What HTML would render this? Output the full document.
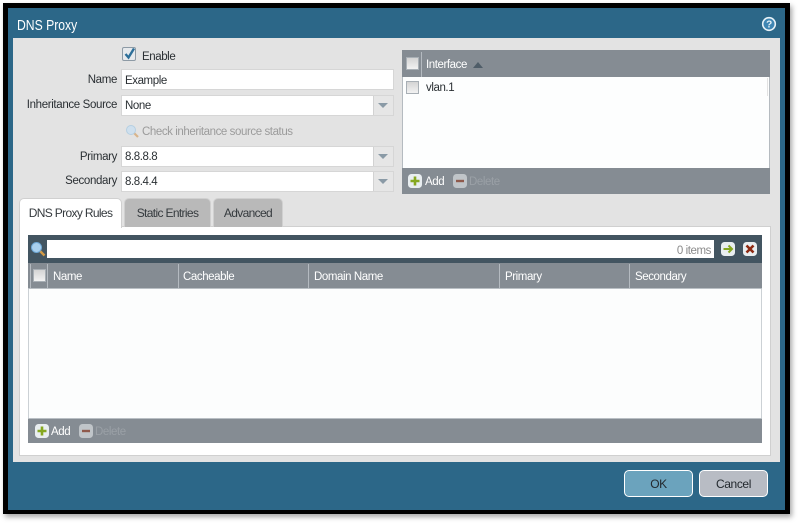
<!DOCTYPE html>
<html><head><meta charset="utf-8"><style>
html,body{margin:0;padding:0;width:800px;height:525px;overflow:hidden;background:#fff}
*{box-sizing:border-box}
body{font-family:"Liberation Sans",sans-serif;font-size:11.5px;letter-spacing:-.42px;color:#2a2f33;position:relative}
#w{position:absolute;left:0;top:0;width:800px;height:525px;filter:blur(.35px)}
.a{position:absolute;white-space:nowrap}
.lb{position:absolute;right:683px;text-align:right;white-space:nowrap;line-height:14px;letter-spacing:-.35px}
.inp{position:absolute;left:121px;width:273px;height:21px;background:#fff;border:1px solid #d6d6d6;line-height:21px;padding-left:3px}
.inp i{position:absolute;right:0;top:0;width:20px;height:19px;background:#e6e6e6;border-left:1px solid #d2d2d2}
.inp i:after{content:"";position:absolute;left:4px;top:7px;border:5px solid transparent;border-top:5px solid #8a9aa6;border-bottom:0}
.cb{position:absolute;width:13px;height:13px;background:linear-gradient(#d4d4d4,#f2f2f2);border:1px solid #a8afb5}
.tab{position:absolute;top:198px;height:29px;background:#b9b9b9;border:1px solid #d0d0d0;border-bottom:0;border-radius:5px 5px 0 0;text-align:center;line-height:28px;font-size:12px;letter-spacing:-.65px;color:#353a3e}
.h{position:absolute;background:#858c93;color:#fff}
.sep{position:absolute;width:1px;background:#b4bac0}
.btn{position:absolute;top:470px;height:27px;border:1.5px solid #fff;border-radius:5px;text-align:center;line-height:26px;font-size:12px;letter-spacing:-.4px;color:#23292e}
</style></head><body><div id="w">
<div class="a" style="left:3px;top:3px;width:787px;height:511px;background:#000;box-shadow:2px 3px 5px rgba(0,0,0,.35)"></div>
<div class="a" style="left:8px;top:8px;width:777px;height:502px;background:#2c6788"></div>
<div class="a" style="left:17px;top:17px;font-size:14.5px;letter-spacing:0;line-height:18px;color:#fff;transform:scaleX(.84);transform-origin:left">DNS Proxy</div>
<svg class="a" style="left:761px;top:16px" width="16" height="16" viewBox="0 0 16 16"><circle cx="8" cy="8" r="6.300" fill="#3f86b3" stroke="#e8f2f7" stroke-width="1.600"/><text x="8" y="11.500" font-size="10" font-weight="bold" text-anchor="middle" fill="#e8f2f7" font-family="Liberation Sans">?</text></svg>
<div class="a" style="left:13px;top:38px;width:767px;height:424px;background:#e3e3e3"></div>

<svg class="a" style="left:122px;top:47px" width="15" height="15" viewBox="0 0 15 15"><rect x=".5" y=".5" width="13" height="13" rx="1.500" fill="#e6e9ec" stroke="#8d9aa5"/><path d="M3.500 7l3 3.500L12 1.500" fill="none" stroke="#2d6f99" stroke-width="2.400"/></svg>
<div class="a" style="left:142px;top:50px;line-height:14px">Enable</div>
<div class="lb" style="top:73px">Name</div>
<div class="inp" style="top:69px;line-height:22px">Example</div>
<div class="lb" style="top:98px">Inheritance Source</div>
<div class="inp" style="top:95px">None<i></i></div>
<svg class="a" style="left:125px;top:124px" width="15" height="15" viewBox="0 0 15 15"><path d="M9 9l4 4" stroke="#d8b48a" stroke-width="2.200"/><circle cx="6" cy="6" r="4.500" fill="#cfe0ee" stroke="#b5cfe2"/></svg>
<div class="a" style="left:142px;top:125px;line-height:14px;color:#9b9b9b">Check inheritance source status</div>
<div class="lb" style="top:150px">Primary</div>
<div class="inp" style="top:146px">8.8.8.8<i></i></div>
<div class="lb" style="top:174px">Secondary</div>
<div class="inp" style="top:171px">8.8.4.4<i></i></div>

<div class="a" style="left:402px;top:50px;width:368px;height:144px;background:#fdfefe;border:1px solid #b5bbc0"></div>
<div class="h" style="left:402px;top:50px;width:368px;height:27px"></div>
<div class="sep" style="left:421px;top:52px;height:25px"></div>
<div class="cb" style="left:406px;top:57px"></div>
<div class="a" style="left:426px;top:58px;color:#fff;line-height:14px">Interface</div>
<div class="a" style="left:473px;top:62px;border:5px solid transparent;border-bottom:6px solid #4f5d68;border-top:0"></div>
<div class="cb" style="left:406px;top:81px"></div>
<div class="a" style="left:426px;top:81px;line-height:14px">vlan.1</div>
<div class="sep" style="left:767px;top:78px;height:18px;background:#e2e2e2"></div>
<div class="h" style="left:402px;top:168px;width:368px;height:26px"></div>
<svg class="a" style="left:408px;top:174px" width="14" height="14" viewBox="0 0 14 14"><rect width="14" height="14" rx="3.500" fill="#e9eef0"/><path d="M7 2.500v9M2.500 7h9" stroke="#86a820" stroke-width="2.600"/></svg>
<div class="a" style="left:425px;top:175px;color:#fff;line-height:14px">Add</div>
<svg class="a" style="left:453px;top:174px" width="14" height="14" viewBox="0 0 14 14"><rect width="14" height="14" rx="3.500" fill="#c0c5c9"/><path d="M3 7h8" stroke="#8f5a4c" stroke-width="2.400"/></svg>
<div class="a" style="left:469px;top:175px;color:#9aa0a6;line-height:14px">Delete</div>

<div class="a" style="left:19px;top:226px;width:752px;height:230px;background:#fff;border:1px solid #d0d0d0"></div>
<div class="tab" style="left:19px;width:103px;background:#fff;height:30px">DNS Proxy Rules</div>
<div class="tab" style="left:124px;width:87px">Static Entries</div>
<div class="tab" style="left:213px;width:70px">Advanced</div>

<div class="a" style="left:28px;top:235px;width:734px;height:208px;background:#fcfdfd;border:1px solid #ccd1d5"></div>
<div class="a" style="left:28px;top:235px;width:734px;height:28px;background:#435561"></div>
<svg class="a" style="left:30px;top:241px" width="16" height="16" viewBox="0 0 16 16"><path d="M10 10l4.500 4.500" stroke="#d39a45" stroke-width="2.400"/><circle cx="6.500" cy="6.500" r="5" fill="#a9d0ee" stroke="#6fa8d6"/></svg>
<div class="a" style="left:47px;top:240px;width:667px;height:18px;background:#fff"></div>
<div class="a" style="right:89px;top:244px;line-height:14px;color:#8a8a8a">0 items</div>
<svg class="a" style="left:721px;top:242px" width="14" height="14" viewBox="0 0 14 14"><rect width="14" height="14" rx="3.500" fill="#e9eef0"/><path d="M2.500 7h8M7.500 3.500L11 7l-3.500 3.500" fill="none" stroke="#86a820" stroke-width="2"/></svg>
<svg class="a" style="left:743px;top:242px" width="14" height="14" viewBox="0 0 14 14"><rect width="14" height="14" rx="3.500" fill="#e9eef0"/><path d="M3.500 3.500l7 7M10.500 3.500l-7 7" stroke="#8e2a12" stroke-width="2.600"/></svg>
<div class="h" style="left:28px;top:263px;width:734px;height:26px;border-bottom:1px solid #b9bfc4"></div>
<div class="sep" style="left:30px;top:264px;height:24px"></div>
<div class="sep" style="left:47px;top:264px;height:24px"></div>
<div class="sep" style="left:178px;top:264px;height:24px"></div>
<div class="sep" style="left:308px;top:264px;height:24px"></div>
<div class="sep" style="left:499px;top:264px;height:24px"></div>
<div class="sep" style="left:629px;top:264px;height:24px"></div>
<div class="cb" style="left:33px;top:269px"></div>
<div class="a" style="left:53px;top:270px;color:#fff;line-height:14px">Name</div>
<div class="a" style="left:183px;top:270px;color:#fff;line-height:14px">Cacheable</div>
<div class="a" style="left:314px;top:270px;color:#fff;line-height:14px">Domain Name</div>
<div class="a" style="left:505px;top:270px;color:#fff;line-height:14px">Primary</div>
<div class="a" style="left:635px;top:270px;color:#fff;line-height:14px">Secondary</div>
<div class="h" style="left:28px;top:418px;width:734px;height:25px;border-top:1px solid #b9bfc4"></div>
<svg class="a" style="left:35px;top:424px" width="14" height="14" viewBox="0 0 14 14"><rect width="14" height="14" rx="3.500" fill="#e9eef0"/><path d="M7 2.500v9M2.500 7h9" stroke="#86a820" stroke-width="2.600"/></svg>
<div class="a" style="left:51px;top:425px;color:#fff;line-height:14px">Add</div>
<svg class="a" style="left:79px;top:424px" width="14" height="14" viewBox="0 0 14 14"><rect width="14" height="14" rx="3.500" fill="#c0c5c9"/><path d="M3 7h8" stroke="#8f5a4c" stroke-width="2.400"/></svg>
<div class="a" style="left:95px;top:425px;color:#9aa0a6;line-height:14px">Delete</div>

<div class="btn" style="left:624px;width:69px;background:#6ba3bd">OK</div>
<div class="btn" style="left:699px;width:69px;background:#b8bcc4">Cancel</div>
</div></body></html>
